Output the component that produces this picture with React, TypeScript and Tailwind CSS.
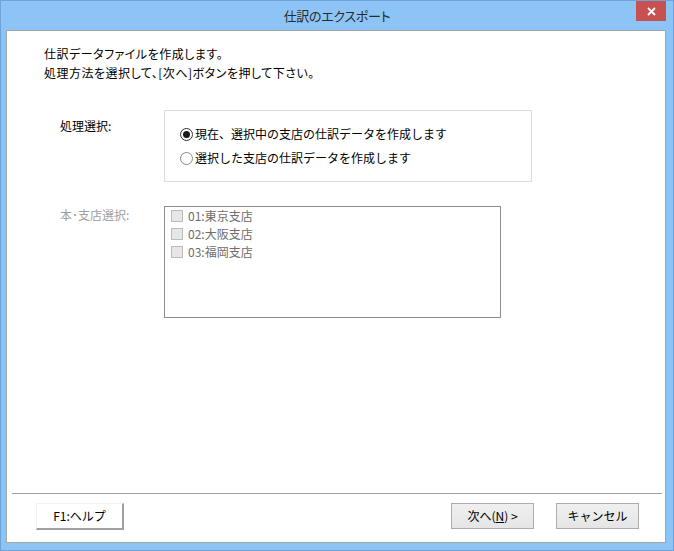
import React from "react";

const font = { fontFamily: '"Noto Sans CJK JP", "Noto Sans", sans-serif' };

function Radio({ checked, label }: { checked: boolean; label: string }) {
  return (
    <div className="flex h-[24px] items-center">
      <span
        className={`flex h-[13px] w-[13px] items-center justify-center rounded-full border bg-white ${
          checked ? "border-[#333333]" : "border-[#8a8a8a]"
        }`}
      >
        {checked && <span className="h-[7px] w-[7px] rounded-full bg-[#1a1a1a]" />}
      </span>
      <span className="ml-[2px] text-[12px] leading-[18px] text-black">{label}</span>
    </div>
  );
}

function Check({ label }: { label: string }) {
  return (
    <div className="flex h-[18px] items-center">
      <span className="h-[12px] w-[12px] border border-[#bcbcbc] bg-[#e6e6e6]" />
      <span className="ml-[5px] text-[12px] leading-[18px] text-[#6d6d6d]">{label}</span>
    </div>
  );
}

export default function App() {
  return (
    <div
      className="flex h-[551px] w-[674px] flex-col border border-[#6da3da] bg-[#8cc4f6]"
      style={font}
    >
      <div className="relative flex h-[29px] shrink-0 items-center justify-center">
        <span className="text-[13px] tracking-[-0.3px] text-[#2b2b2b]" style={{ fontFeatureSettings: '"palt"' }}>
          仕訳のエクスポート
        </span>
        <div className="absolute right-[7px] top-0 flex h-[20px] w-[30px] items-center justify-center bg-[#c75050]">
          <svg width="9" height="9" viewBox="0 0 9 9">
            <path d="M1 1 L8 8 M8 1 L1 8" stroke="#ffffff" strokeWidth="1.8" />
          </svg>
        </div>
      </div>
      <div className="mb-[7px] ml-[5px] mr-[7px] flex flex-1 flex-col border border-[#a6a6a6] bg-white">
        <div
          className="pl-[37px] pt-[13px] text-[12px] leading-[19px] tracking-[0.5px] text-black"
          style={{ fontFeatureSettings: '"palt"' }}
        >
          <div>仕訳データファイルを作成します。</div>
          <div>処理方法を選択して、[次へ]ボタンを押して下さい。</div>
        </div>

        <div className="mt-[28px] flex pl-[53px]">
          <div className="w-[104px] pt-[7px] text-[12px] leading-[18px] text-black">処理選択:</div>
          <div className="h-[72px] w-[368px] border border-[#dcdcdc] px-[15px] py-[11px]">
            <Radio checked label="現在、選択中の支店の仕訳データを作成します" />
            <Radio checked={false} label="選択した支店の仕訳データを作成します" />
          </div>
        </div>

        <div className="mt-[24px] flex pl-[53px]">
          <div className="w-[104px] text-[12px] leading-[18px] text-[#a0a0a0]">本･支店選択:</div>
          <div className="h-[112px] w-[337px] border border-[#8a8d93] pl-[6px]">
            <Check label="01:東京支店" />
            <Check label="02:大阪支店" />
            <Check label="03:福岡支店" />
          </div>
        </div>

        <div className="flex-1" />

        <div className="ml-[5px] mr-[3px] flex items-start border-t border-[#a0a0a0] pb-[12px] pl-[24px] pr-[23px] pt-[9px]">
          <div className="flex h-[27px] w-[88px] items-center justify-center border-b-2 border-l border-r-2 border-t border-b-[#a0a0a0] border-l-[#f2f2f2] border-r-[#a0a0a0] border-t-[#f2f2f2] bg-white text-[12px] text-black">
            F1:ヘルプ
          </div>
          <div className="flex-1" />
          <div className="flex h-[26px] w-[83px] items-center justify-center border border-[#adadad] bg-gradient-to-b from-[#f0f0f0] to-[#e5e5e5] text-[12px] text-black">
            次へ(<span className="underline">N</span>) &gt;
          </div>
          <div className="ml-[22px] flex h-[26px] w-[83px] items-center justify-center border border-[#adadad] bg-gradient-to-b from-[#f0f0f0] to-[#e5e5e5] text-[12px] text-black">
            キャンセル
          </div>
        </div>
      </div>
    </div>
  );
}
